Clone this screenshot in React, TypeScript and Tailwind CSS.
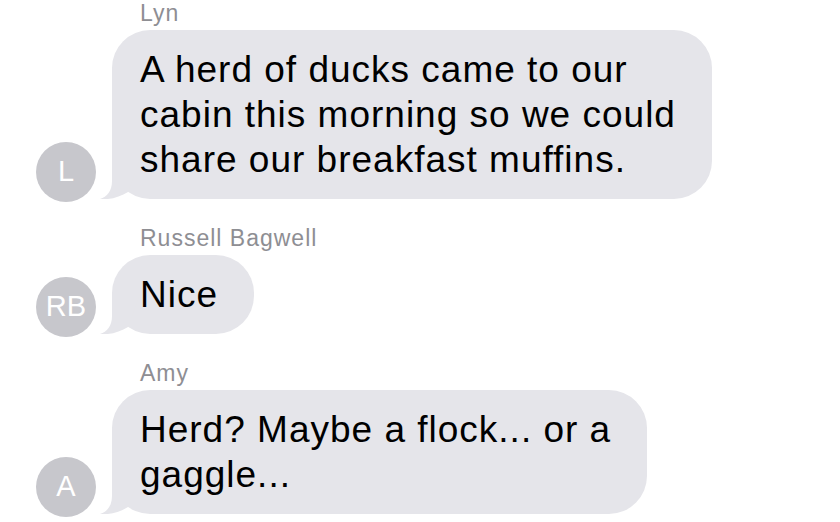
type Msg = {
  name: string
  initials: string
  lines: string[]
}

const messages: Msg[] = [
  {
    name: 'Lyn',
    initials: 'L',
    lines: ['A herd of ducks came to our', 'cabin this morning so we could', 'share our breakfast muffins.'],
  },
  { name: 'Russell Bagwell', initials: 'RB', lines: ['Nice'] },
  { name: 'Amy', initials: 'A', lines: ['Herd? Maybe a flock... or a', 'gaggle...'] },
]

const font = { fontFamily: '"Liberation Sans", Arial, Helvetica, sans-serif' }

/** Incoming bubble tail, pinned to the bubble's bottom-left corner. */
function Tail() {
  return (
    <svg
      className="absolute bottom-0 left-[-12px] h-[40px] w-[40px] text-[#e5e5ea]"
      viewBox="0 0 40 40"
      fill="currentColor"
    >
      <path d="M12 0 L12 22 C12 32 7 38 0 40 C10 41 20 38 28 33 L40 0 Z" />
    </svg>
  )
}

function Message({ msg, first }: { msg: Msg; first: boolean }) {
  return (
    <div className={first ? 'mt-0' : 'mt-[23px]'}>
      <div className="mb-[4px] ml-[140px] text-[23px] leading-[26px] tracking-[1px] text-[#8e8e93]">{msg.name}</div>
      <div className="flex items-end">
        <div className="ml-[36px] flex h-[60px] w-[60px] shrink-0 items-center justify-center rounded-full bg-[#c7c7cc] text-[29px] text-white">
          {msg.initials}
        </div>
        <div className="relative mb-[3px] ml-[16px] rounded-[38px] bg-[#e5e5ea] pt-[17px] pr-[36px] pb-[17px] pl-[28px] text-[37px] leading-[45px] tracking-[1px] text-black">
          <Tail />
          <div className="relative whitespace-nowrap">
            {msg.lines.map((l, i) => (
              <div key={i}>{l}</div>
            ))}
          </div>
        </div>
      </div>
    </div>
  )
}

export default function App() {
  return (
    <div className="h-[522px] w-[840px] overflow-hidden bg-white" style={font}>
      {messages.map((m, i) => (
        <Message key={m.name} msg={m} first={i === 0} />
      ))}
    </div>
  )
}
